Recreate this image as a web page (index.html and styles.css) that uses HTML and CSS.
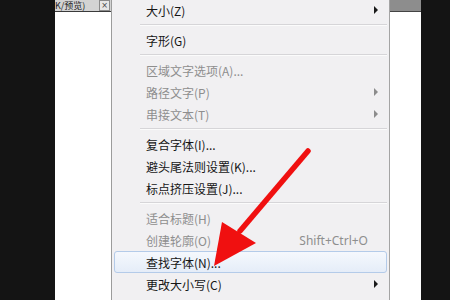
FILE: index.html
```html
<!DOCTYPE html>
<html lang="zh-CN">
<head>
    <meta charset="UTF-8">
    <title>文字菜单</title>
    <link rel="stylesheet" href="styles.css">
</head>
<body>
    <div class="screen">
        <div class="dark-side"></div>
        <div class="doc-panel">
            <div class="tab-strip">
                <span class="tab-title">K/预览)</span>
                <span class="tab-close">×</span>
            </div>
        </div>
        <div class="menu">
            <ul class="menu-list">
                <li class="item">大小(Z)<span class="sub"></span></li>
                <li class="sep"></li>
                <li class="item">字形(G)</li>
                <li class="sep"></li>
                <li class="item disabled">区域文字选项(A)...</li>
                <li class="item disabled">路径文字(P)<span class="sub"></span></li>
                <li class="item disabled">串接文本(T)<span class="sub"></span></li>
                <li class="sep"></li>
                <li class="item">复合字体(I)...</li>
                <li class="item">避头尾法则设置(K)...</li>
                <li class="item">标点挤压设置(J)...</li>
                <li class="sep"></li>
                <li class="item disabled">适合标题(H)</li>
                <li class="item disabled">创建轮廓(O)<span class="shortcut">Shift+Ctrl+O</span></li>
                <li class="item hover">查找字体(N)...</li>
                <li class="item">更改大小写(C)<span class="sub"></span></li>
            </ul>
        </div>
        <div class="side-panel">
            <div class="side-strip"></div>
        </div>
        <div class="dark-side"></div>
    </div>
    <!-- red pointer drawn over the menu -->
    <svg class="pointer" width="450" height="300" viewBox="0 0 450 300">
        <line x1="308" y1="151" x2="240" y2="231" stroke="#f01010" stroke-width="5.5" stroke-linecap="round"/>
        <polygon points="214,266 222,222 256,243" fill="#f01010"/>
    </svg>
</body>
</html>
```

FILE: styles.css
```css
:root {
    --menu-bg: #f1f0f2;
    --text: #161616;
    --muted: #8e8e8e;
    --dark: #141414;
}
body { margin: 0; font-family: "Noto Sans CJK SC", "Noto Sans", sans-serif; background: var(--dark); overflow: hidden; }
.screen { display: flex; height: 300px; width: 450px; }
.dark-side { flex: 1; background: var(--dark); }
.screen > .dark-side:first-child { flex: 0 0 55px; }
.doc-panel { flex: 0 0 56px; background: white; }
.tab-strip { height: 11px; display: flex; align-items: center; background: #d3d3d3; border-bottom: 1px solid #3a3a3a; }
.tab-title { font-size: 9px; line-height: 11px; color: #222; width: 44px; white-space: nowrap; }
.tab-close { width: 9px; height: 9px; border: 1px solid #8a8a8a; background: #e6e6e6; color: #444; font-family: "DejaVu Sans", sans-serif; font-size: 8px; line-height: 9px; text-align: center; }
.menu { flex: 0 0 277px; background: var(--menu-bg); border-left: 1px solid #9c9c9c; border-right: 1px solid #a4a4a4; }
.menu-list { list-style: none; margin: -1px 0 0; padding: 0; }
.item { height: 22px; margin: 0 2px; padding: 0 8px 0 31px; display: flex; align-items: center; font-size: 12px; color: var(--text); box-sizing: border-box; border: 1px solid transparent; border-radius: 3px; }
.item.disabled { color: var(--muted); }
.item.hover { background: linear-gradient(#f5f8fd, #e5edf8); border-color: #b4cbe9; }
.shortcut { margin-left: auto; margin-right: 10px; font-family: "Noto Sans", sans-serif; font-size: 12px; }
.sub { margin-left: auto; width: 0; height: 0; border-top: 4px solid transparent; border-bottom: 4px solid transparent; border-left: 4px solid #1a1a1a; }
.disabled .sub { border-left-color: #8c8c8c; }
.sep { height: 8px; margin: 0 2px 0 28px; display: flex; flex-direction: column; justify-content: center; }
.sep::before { content: ''; height: 1px; background: #d6d5d8; border-bottom: 1px solid #fbfbfb; }
.side-panel { flex: 0 0 31px; background: white; }
.side-strip { height: 11px; background: #8d8d8d; border-bottom: 1px solid #444; }
.pointer { position: absolute; left: 0; top: 0; }
```
